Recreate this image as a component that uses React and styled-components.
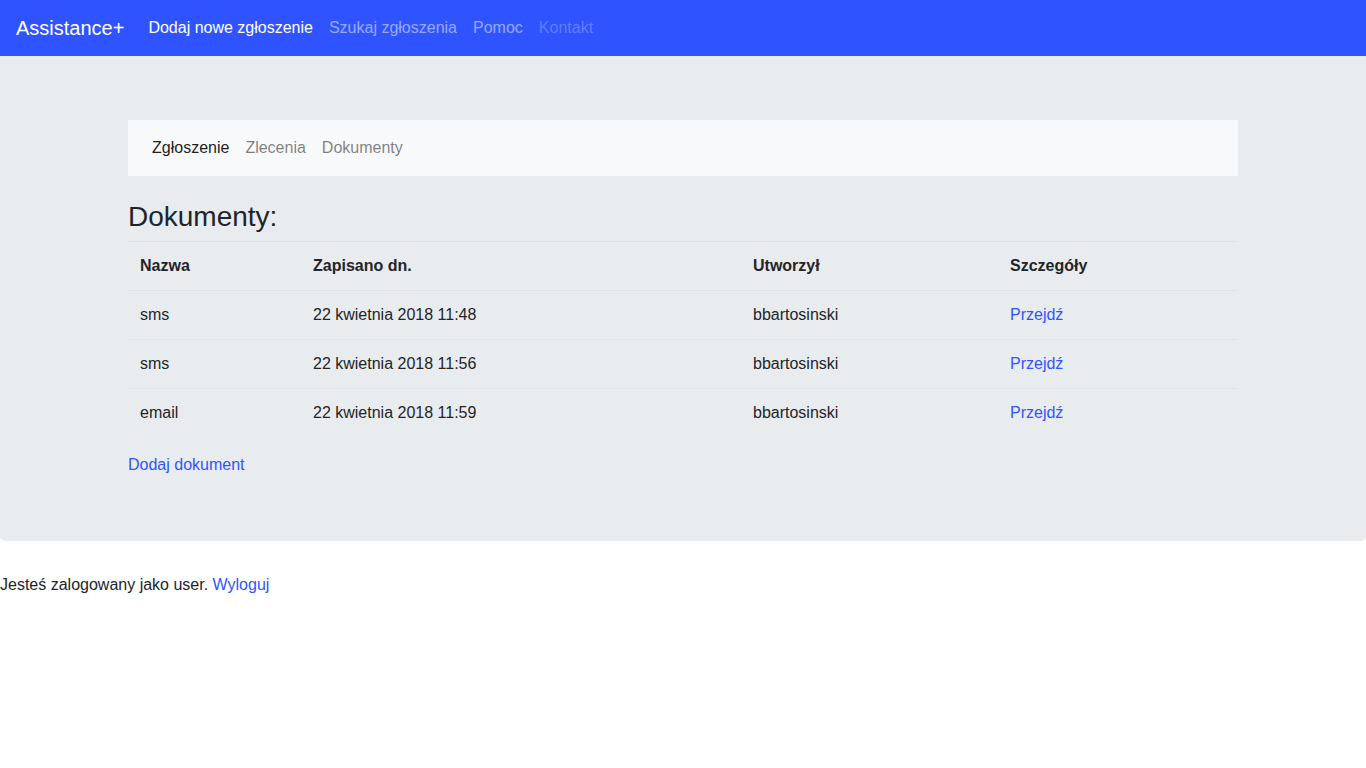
import React from 'react'
import styled, { createGlobalStyle } from 'styled-components'

const GlobalStyle = createGlobalStyle`
  * { box-sizing: border-box; }
  body {
    margin: 0;
    font-family: "Liberation Sans", Arial, sans-serif;
    font-size: 16px;
    line-height: 1.5;
    color: #212529;
    background: #fff;
  }
  a { text-decoration: none; }
`

const TopBar = styled.nav`
  display: flex;
  align-items: center;
  height: 56px;
  padding: 8px 16px;
  background: #2f54ff;
`

const Brand = styled.a`
  font-size: 20px;
  line-height: 30px;
  color: #fff;
  margin-right: 16px;
`

const TopLink = styled.a`
  padding: 8px;
  line-height: 24px;
  color: ${(p) =>
    p.$state === 'active'
      ? '#fff'
      : p.$state === 'disabled'
      ? 'rgba(255,255,255,.25)'
      : 'rgba(255,255,255,.5)'};
`

const Jumbotron = styled.section`
  background: #e9ecef;
  padding: 64px 0;
  margin-bottom: 32px;
  border-radius: 0 0 4.8px 4.8px;
`

const Container = styled.div`
  max-width: 1140px;
  margin: 0 auto;
  padding: 0 15px;
`

const SubNav = styled.nav`
  display: flex;
  align-items: center;
  height: 56px;
  padding: 8px 16px;
  background: #f8f9fa;
  margin-bottom: 24px;
`

const SubLink = styled.a`
  padding: 8px;
  line-height: 24px;
  color: ${(p) => (p.$active ? 'rgba(0,0,0,.9)' : 'rgba(0,0,0,.5)')};
`

const Heading = styled.h3`
  margin: 0 0 8px;
  font-size: 28px;
  font-weight: 500;
  line-height: 33px;
`

const Table = styled.table`
  width: 100%;
  border-collapse: collapse;
  margin-bottom: 16px;
  table-layout: fixed;

  th,
  td {
    padding: 12px;
    border-top: 1px solid #dee2e6;
    text-align: left;
    vertical-align: top;
    line-height: 24px;
  }
  th {
    font-weight: 700;
  }
`

const TextLink = styled.a`
  color: #2f54ff;
`

const Footer = styled.div`
  line-height: 24px;
`

const docs = [
  { name: 'sms', date: '22 kwietnia 2018 11:48', user: 'bbartosinski' },
  { name: 'sms', date: '22 kwietnia 2018 11:56', user: 'bbartosinski' },
  { name: 'email', date: '22 kwietnia 2018 11:59', user: 'bbartosinski' },
]

const App = () => {
  return (
    <>
      <GlobalStyle />
      <TopBar>
        <Brand href="#">Assistance+</Brand>
        <TopLink href="#" $state="active">Dodaj nowe zgłoszenie</TopLink>
        <TopLink href="#">Szukaj zgłoszenia</TopLink>
        <TopLink href="#">Pomoc</TopLink>
        <TopLink href="#" $state="disabled">Kontakt</TopLink>
      </TopBar>
      <Jumbotron>
        <Container>
          <SubNav>
            <SubLink href="#" $active>Zgłoszenie</SubLink>
            <SubLink href="#">Zlecenia</SubLink>
            <SubLink href="#">Dokumenty</SubLink>
          </SubNav>
          <Heading>Dokumenty:</Heading>
          <Table>
            <colgroup>
              <col style={{ width: 173 }} />
              <col style={{ width: 440 }} />
              <col style={{ width: 257 }} />
              <col style={{ width: 240 }} />
            </colgroup>
            <thead>
              <tr>
                <th>Nazwa</th>
                <th>Zapisano dn.</th>
                <th>Utworzył</th>
                <th>Szczegóły</th>
              </tr>
            </thead>
            <tbody>
              {docs.map((d, i) => (
                <tr key={i}>
                  <td>{d.name}</td>
                  <td>{d.date}</td>
                  <td>{d.user}</td>
                  <td>
                    <TextLink href="#">Przejdź</TextLink>
                  </td>
                </tr>
              ))}
            </tbody>
          </Table>
          <TextLink href="#">Dodaj dokument</TextLink>
        </Container>
      </Jumbotron>
      <Footer>
        Jesteś zalogowany jako user. <TextLink href="#">Wyloguj</TextLink>
      </Footer>
    </>
  )
}

export default App
